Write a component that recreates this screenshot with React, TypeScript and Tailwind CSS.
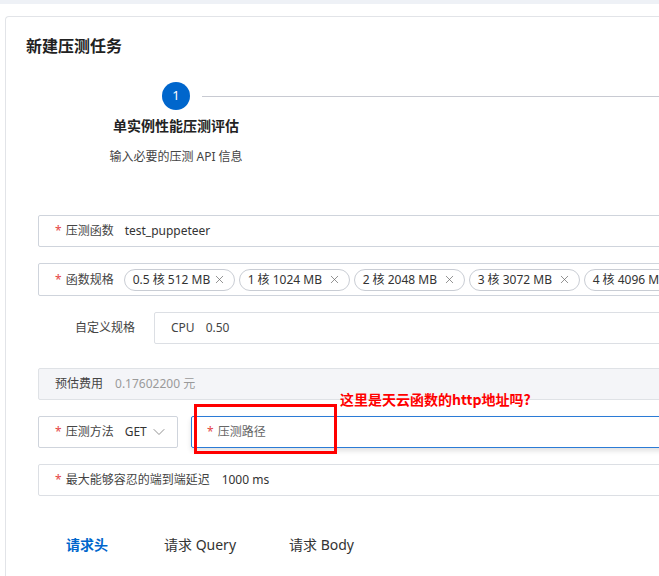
import { ChevronDown, X } from 'lucide-react'

const SPECS = ['0.5 核 512 MB', '1 核 1024 MB', '2 核 2048 MB', '3 核 3072 MB', '4 核 4096 MB']

function Req({ label }: { label: string }) {
  return (
    <span className="shrink-0 text-[#444]">
      <span className="text-[#e54545] mr-[4px]">*</span>
      {label}
    </span>
  )
}

export default function App() {
  return (
    <div className="w-[659px] h-[576px] overflow-hidden bg-white font-['Noto_Sans','Noto_Sans_CJK_SC',sans-serif] text-[12px] text-[#333]">
      <div className="h-[4px] bg-[#eef1f6]" />

      {/* Card */}
      <div className="ml-[5px] mt-[12px] w-[720px] border-t border-l border-[#e2e4e8] rounded-tl-[4px] pt-[17px] pb-10">
        <h1 className="ml-[20px] text-[16px] leading-[24px] font-semibold text-[#222]">新建压测任务</h1>

        {/* Steps */}
        <div className="mt-[24px] flex items-center">
          <div className="w-[156px] shrink-0" />
          <div className="w-[28px] h-[28px] shrink-0 rounded-full bg-[#0066cc] text-white text-[13px] flex items-center justify-center">
            1
          </div>
          <div className="ml-[12px] flex-1 h-px bg-[#c8cad2]" />
        </div>
        <div className="ml-[32px] w-[276px] text-center">
          <div className="mt-[6px] text-[14px] leading-[20px] font-bold text-[#222]">单实例性能压测评估</div>
          <div className="mt-[12px] text-[12px] leading-[18px] text-[#444]">输入必要的压测 API 信息</div>
        </div>

        {/* Form */}
        <div className="ml-[32px] mt-[49px]">
          <div className="h-[32px] border border-[#cfd4dc] rounded-[2px] flex items-center px-[16px] gap-[11px]">
            <Req label="压测函数" />
            <span>test_puppeteer</span>
          </div>

          <div className="mt-[16px] h-[33px] border border-[#cfd4dc] rounded-[2px] flex items-center pl-[16px] gap-[10px]">
            <Req label="函数规格" />
            <div className="flex gap-[4px]">
              {SPECS.map((s) => (
                <div
                  key={s}
                  className="h-[22px] w-[111px] shrink-0 rounded-full border border-[#c9cdd4] flex items-center justify-between pl-[8px] pr-[8px] text-[12px] text-[#333]"
                >
                  <span>{s}</span>
                  <X size={13} strokeWidth={1.3} className="text-[#666]" />
                </div>
              ))}
            </div>
          </div>

          <div className="mt-[16px] flex items-center">
            <span className="w-[116px] shrink-0 pl-[37px] text-[#444]">自定义规格</span>
            <div className="flex-1 h-[32px] border border-[#dcdfe4] rounded-[2px] flex items-center px-[16px] gap-[11px] text-[#444]">
              <span>CPU</span>
              <span>0.50</span>
            </div>
          </div>

          <div className="mt-[24px] h-[32px] bg-[#f4f5f8] border border-[#dfe2e6] rounded-[2px] flex items-center px-[16px] gap-[12px]">
            <span className="text-[#444]">预估费用</span>
            <span className="text-[#9a9a9a]">0.17602200 元</span>
          </div>

          <div className="mt-[16px] flex gap-[13px]">
            <div className="w-[140px] shrink-0 h-[32px] border border-[#cfd4dc] rounded-[2px] flex items-center pl-[16px] pr-[8px]">
              <Req label="压测方法" />
              <span className="ml-[11px]">GET</span>
              <ChevronDown size={20} strokeWidth={1.1} className="ml-auto text-[#888]" />
            </div>
            <div className="relative flex-1 h-[32px] border border-[#2b7bd6] rounded-[2px] shadow-[0_3px_5px_rgba(0,0,0,0.12)] flex items-center px-[15px]">
              <span className="text-[#666]">
                <span className="text-[#e54545] mr-[4px]">*</span>压测路径
              </span>
              {/* annotation */}
              <div className="absolute left-[2px] top-[-13px] w-[143px] h-[50px] border-[3px] border-[#ff0000]" />
              <div className="absolute left-[148px] top-[-27px] whitespace-nowrap text-[14px] leading-[18px] font-bold text-[#ff0000] font-['Noto_Sans_CJK_SC',sans-serif]">
                这里是天云函数的http地址吗?
              </div>
            </div>
          </div>

          <div className="mt-[16px] h-[32px] border border-[#dcdfe4] rounded-[2px] flex items-center px-[16px] gap-[12px]">
            <Req label="最大能够容忍的端到端延迟" />
            <span>1000 ms</span>
          </div>

          {/* Tabs */}
          <div className="mt-[39px] flex text-[14px] leading-[20px] text-[#333]">
            <span className="ml-[28px] font-bold text-[#0066cc]">请求头</span>
            <span className="ml-[56px]">请求 Query</span>
            <span className="ml-[53px]">请求 Body</span>
          </div>
        </div>
      </div>
    </div>
  )
}
